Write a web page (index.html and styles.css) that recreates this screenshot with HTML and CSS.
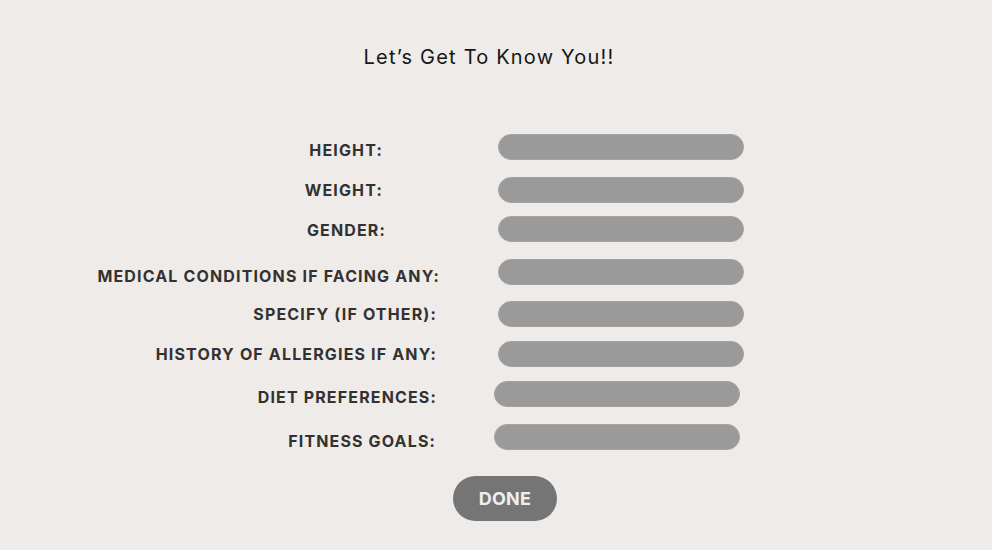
FILE: index.html
```html
<!DOCTYPE html>
<html lang="en">
<head>
<meta charset="utf-8">
<title>Let's Get To Know You</title>
<link rel="stylesheet" href="styles.css">
</head>
<body>
<main class="page">
  <h1 class="title">Let’s Get To Know You!!</h1>
  <form class="form">
    <div class="row">
      <label class="label pr-58 d5">HEIGHT:</label>
      <div class="field"></div>
    </div>
    <div class="row g17">
      <label class="label pr-58">WEIGHT:</label>
      <div class="field"></div>
    </div>
    <div class="row g13">
      <label class="label pr-55 d1">GENDER:</label>
      <div class="field"></div>
    </div>
    <div class="row g17">
      <label class="label pr-0 d7">MEDICAL CONDITIONS IF FACING ANY:</label>
      <div class="field"></div>
    </div>
    <div class="row g16">
      <label class="label pr-4">SPECIFY (IF OTHER):</label>
      <div class="field"></div>
    </div>
    <div class="row g14">
      <label class="label pr-4">HISTORY OF ALLERGIES IF ANY:</label>
      <div class="field"></div>
    </div>
    <div class="row g14">
      <label class="label pr-4 d6">DIET PREFERENCES:</label>
      <div class="field shift"></div>
    </div>
    <div class="row g17">
      <label class="label pr-5 d8">FITNESS GOALS:</label>
      <div class="field shift"></div>
    </div>
    <div class="actions">
      <button type="button" class="done">DONE</button>
    </div>
  </form>
</main>
</body>
</html>
```
FILE: styles.css
```css
* { box-sizing: border-box; }
html, body {
  margin: 0;
  padding: 0;
  background: #efebe8;
}
body {
  width: 992px;
  height: 550px;
  overflow: hidden;
  font-family: Inter, "Liberation Sans", sans-serif;
}
.page {
  display: flex;
  flex-direction: column;
}
.title {
  margin: 0;
  padding-top: 44px;
  text-align: center;
  width: 978px;
  font-size: 20px;
  line-height: 26px;
  font-weight: 400;
  letter-spacing: 1.2px;
  color: #161616;
}
.form {
  margin-top: 64px;
  display: flex;
  flex-direction: column;
}
.row {
  display: flex;
  align-items: center;
  height: 26px;
}
.g13 { margin-top: 13px; }
.g14 { margin-top: 14px; }
.g16 { margin-top: 16px; }
.g17 { margin-top: 17px; }
.label {
  width: 440px;
  text-align: right;
  font-size: 16px;
  font-weight: 700;
  letter-spacing: 1.15px;
  color: #333131;
  line-height: 20px;
}
.d1 { padding-top: 1px; }
.d5 { padding-top: 5px; }
.d6 { padding-top: 6px; }
.d7 { padding-top: 7px; }
.d8 { padding-top: 8px; }
.pr-58 { padding-right: 57px; }
.pr-55 { padding-right: 54px; }
.pr-0 { padding-right: 0; }
.pr-4 { padding-right: 3px; }
.pr-5 { padding-right: 4px; }
.field {
  margin-left: 58px;
  width: 246px;
  height: 26px;
  border-radius: 13px;
  background: #9a9a9a;
  border: 1px solid #a3a3a3;
}
.field.shift { margin-left: 54px; }
.actions {
  margin-top: 26px;
  display: flex;
  justify-content: center;
  width: 1010px;
}
.done {
  width: 104px;
  height: 45px;
  border-radius: 23px;
  border: none;
  background: #757575;
  color: #efefef;
  font-family: Inter, "Liberation Sans", sans-serif;
  font-size: 18px;
  font-weight: 700;
  letter-spacing: 0.3px;
}
```
